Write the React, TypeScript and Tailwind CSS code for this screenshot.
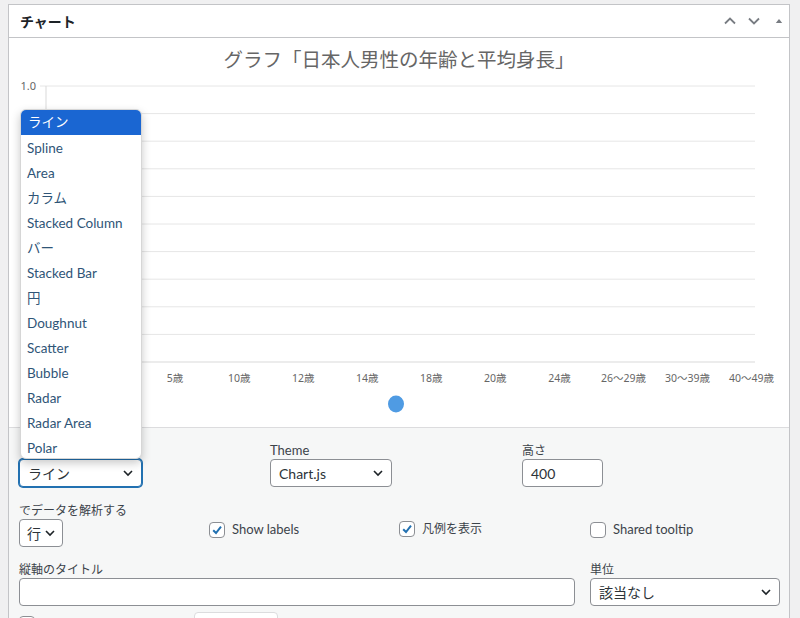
import React from "react";

const FONT = '"Noto Sans", "Noto Sans CJK JP", sans-serif';
const UI = 'Lato, "Noto Sans CJK JP", sans-serif';

function Chevron({ className = "" }: { className?: string }) {
  return (
    <svg width="12" height="8" viewBox="0 0 12 8" className={className}>
      <path d="M2 2 L6 6 L10 2" fill="none" stroke="#1d2327" strokeWidth="1.6" />
    </svg>
  );
}

function Select({ text, w, focused = false }: { text: string; w: string; focused?: boolean }) {
  return (
    <div
      className={`${w} h-[28px] bg-white rounded-[4px] flex items-center justify-between pl-[8px] pr-[7px] text-[14px] text-[#2c3338] ${
        focused ? "border border-[#2271b1] shadow-[0_0_0_1px_#2271b1]" : "border border-[#8c8f94]"
      }`}
    >
      <span>{text}</span>
      <Chevron />
    </div>
  );
}

function Checkbox({ checked, label, jp = false }: { checked: boolean; label: string; jp?: boolean }) {
  return (
    <div className="flex items-center gap-[7px]">
      <div className="w-[16px] h-[16px] rounded-[4px] border border-[#8c8f94] bg-white flex items-center justify-center">
        {checked && (
          <svg width="12" height="12" viewBox="0 0 12 12">
            <path d="M2.2 6.2 L5 9 L10 2.6" fill="none" stroke="#2271b1" strokeWidth="2" />
          </svg>
        )}
      </div>
      <span className={`${jp ? "text-[12px]" : "text-[13px]"} text-[#3c434a]`}>{label}</span>
    </div>
  );
}

const xLabels: [number, string][] = [
  [2, "5歳"],
  [3, "10歳"],
  [4, "12歳"],
  [5, "14歳"],
  [6, "18歳"],
  [7, "20歳"],
  [8, "24歳"],
  [9, "26〜29歳"],
  [10, "30〜39歳"],
  [11, "40〜49歳"],
];
const items = [
  "Spline",
  "Area",
  "カラム",
  "Stacked Column",
  "バー",
  "Stacked Bar",
  "円",
  "Doughnut",
  "Scatter",
  "Bubble",
  "Radar",
  "Radar Area",
  "Polar",
];

export default function App() {
  return (
    <div className="relative w-[800px] h-[618px] overflow-hidden bg-[#f0f0f1]" style={{ fontFamily: UI }}>
      <div className="ml-[8px] mt-[4px] w-[782px] border border-[#c3c4c7] bg-white">
        {/* header */}
        <div className="h-[33px] border-b border-[#c3c4c7] flex items-center justify-between pl-[11px] pr-[5px]">
          <span className="text-[14px] font-bold text-[#1d2327]" style={{ fontFamily: FONT }}>
            チャート
          </span>
          <div className="flex items-center">
            <svg width="14" height="10" viewBox="0 0 14 10">
              <path d="M2 7.5 L7 2.5 L12 7.5" fill="none" stroke="#787c82" strokeWidth="1.8" />
            </svg>
            <svg width="14" height="10" viewBox="0 0 14 10" className="ml-[10px]">
              <path d="M2 2.5 L7 7.5 L12 2.5" fill="none" stroke="#787c82" strokeWidth="1.8" />
            </svg>
            <svg width="10" height="10" viewBox="0 0 10 10" className="ml-[13px]">
              <path d="M1.8 7 L5 3 L8.2 7 Z" fill="#787c82" />
            </svg>
          </div>
        </div>

        {/* chart */}
        <div className="h-[390px] border-b border-[#dcdcde]">
          <div className="pt-[9px] h-[36px] text-center text-[19.5px] leading-[26px] text-[#666666]" style={{ fontFamily: FONT }}>
            グラフ「日本人男性の年齢と平均身長」
          </div>
          <svg width="780" height="353" className="block">
            {Array.from({ length: 11 }).map((_, k) => (
              <line key={k} x1="31" x2="746" y1={12 + 27.6 * k} y2={12 + 27.6 * k} stroke={k === 10 ? "#d9d9d9" : "#e6e6e6"} strokeWidth="1" />
            ))}
            <line x1="37" x2="37" y1="12" y2="288" stroke="#d9d9d9" strokeWidth="1" />
            <text x="27" y="16" textAnchor="end" fontSize="11" fill="#666" fontFamily={FONT}>
              1.0
            </text>
            {xLabels.map(([k, l]) => (
              <text key={l} x={38 + 64.05 * k} y={308} textAnchor="middle" fontSize="10.5" fill="#666" fontFamily={FONT}>
                {l}
              </text>
            ))}
            <ellipse cx="387" cy="330" rx="8" ry="8.5" fill="#4f9be3" />
          </svg>
        </div>

        {/* settings */}
        <div className="bg-[#f6f7f7] pl-[10px] pr-[9px] pt-[14px] pb-[20px] text-[13px] text-[#3c434a]">
          <div className="grid grid-cols-[251px_252px_1fr]">
            <div>
              <div className="h-[17px]" />
              <Select text="ライン" w="w-[123px]" focused />
            </div>
            <div>
              <div className="leading-[17px]">Theme</div>
              <Select text="Chart.js" w="w-[122px]" />
            </div>
            <div>
              <div className="leading-[17px] text-[12px]">高さ</div>
              <div className="w-[81px] h-[28px] bg-white rounded-[4px] border border-[#8c8f94] flex items-center pl-[8px] text-[14px] text-[#2c3338]">
                400
              </div>
            </div>
          </div>

          <div className="grid grid-cols-[190px_190px_191px_1fr] mt-[15px]">
            <div>
              <div className="leading-[17px] text-[12px]">でデータを解析する</div>
              <div className="w-[44px] h-[28px] bg-white rounded-[4px] border border-[#8c8f94] flex items-center justify-between pl-[7px] pr-[6px] text-[14px] text-[#2c3338]">
                <span>行</span>
                <Chevron />
              </div>
            </div>
            <div className="mt-[18px]">
              <Checkbox checked label="Show labels" />
            </div>
            <div className="mt-[18px]">
              <Checkbox checked jp label="凡例を表示" />
            </div>
            <div className="mt-[18px]">
              <Checkbox checked={false} label="Shared tooltip" />
            </div>
          </div>

          <div className="flex gap-[15px] mt-[14px]">
            <div className="w-[556px]">
              <div className="leading-[17px] text-[12px]">縦軸のタイトル</div>
              <div className="h-[28px] bg-white rounded-[4px] border border-[#8c8f94]" />
            </div>
            <div className="flex-1">
              <div className="leading-[17px] text-[12px]">単位</div>
              <Select text="該当なし" w="w-full" />
            </div>
          </div>

          <div className="flex items-start mt-[6px]">
            <div className="mt-[4px] w-[16px] h-[16px] rounded-[4px] border border-[#8c8f94] bg-white" />
            <div className="ml-[159px] w-[84px] h-[28px] bg-white rounded-[4px] border border-[#dcdcde]" />
          </div>
        </div>
      </div>

      {/* open dropdown */}
      <div className="absolute left-[20px] top-[109px] w-[122px] h-[350px] overflow-hidden bg-white rounded-[6px] border border-[#d6d6d6] shadow-[0_4px_10px_rgba(0,0,0,0.22)] text-[13.5px]">
        <div className="h-[25px] bg-[#1a66d2] text-white flex items-center pl-[7px]">ライン</div>
        <div className="pt-[1px]">
          {items.map((it) => (
            <div key={it} className="h-[25px] flex items-center pl-[6px] text-[#2f5577]">
              {it}
            </div>
          ))}
        </div>
      </div>
    </div>
  );
}
